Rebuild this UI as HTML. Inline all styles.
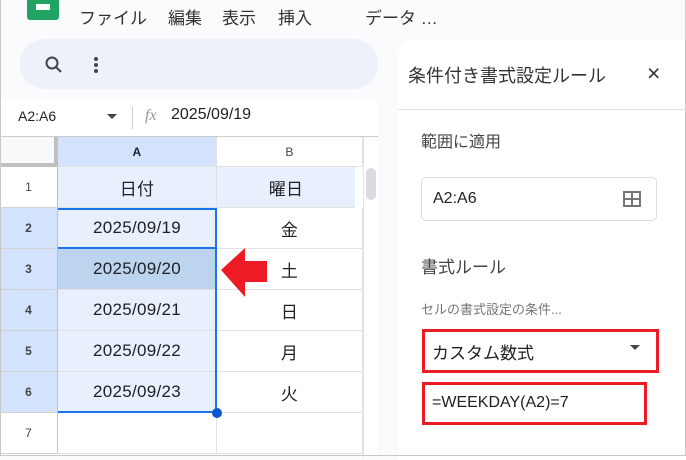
<!DOCTYPE html>
<html><head><meta charset="utf-8"><style>
*{margin:0;padding:0;box-sizing:border-box}
body{width:686px;height:456px;overflow:hidden;background:#f9fbfd;font-family:"Liberation Sans","Noto Sans CJK JP",sans-serif;position:relative;color:#202124}
.a{position:absolute}
.menu{top:4px;font-size:17px;color:#333}
.cell{position:absolute;display:flex;align-items:center;justify-content:center;border-right:1px solid #e1e1e1;border-bottom:1px solid #e1e1e1;font-size:17px;letter-spacing:0.3px}
.rh{position:absolute;left:0;width:58px;display:flex;align-items:center;justify-content:center;font-size:12px;color:#444;border-bottom:1px solid #d0d0d0;border-right:1px solid #c0c0c0}
</style></head><body>
<div class="a" style="left:0;top:0;width:686px;height:456px;border:1px solid #c8c8c8;border-top:none;z-index:50;pointer-events:none"></div>
<div class="a" style="left:27px;top:0;width:32px;height:20px;background:#1fa463;border-radius:0 0 3px 3px"></div>
<div class="a" style="left:36px;top:4px;width:14px;height:6px;background:#fff"></div>
<div class="a menu" style="left:79px">ファイル</div>
<div class="a menu" style="left:168px">編集</div>
<div class="a menu" style="left:222px">表示</div>
<div class="a menu" style="left:278px">挿入</div>
<div class="a menu" style="left:365px">データ …</div>
<div class="a" style="left:20px;top:39px;width:358px;height:50px;background:#edf2fa;border-radius:25px"></div>
<svg class="a" style="left:44px;top:55px" width="20" height="20" viewBox="0 0 20 20"><circle cx="8" cy="8" r="5.5" fill="none" stroke="#444" stroke-width="2"/><path d="M12 12l5 5" stroke="#444" stroke-width="2"/></svg>
<div class="a" style="left:94px;top:57px;width:4px;height:4px;border-radius:2px;background:#444;box-shadow:0 6px 0 #444,0 12px 0 #444"></div>
<div class="a" style="left:0;top:100px;width:378px;height:37px;background:#fff;border-bottom:1px solid #ccc"></div>
<div class="a" style="left:18px;top:108px;font-size:14px">A2:A6</div>
<div class="a" style="left:107px;top:114px;border:5px solid transparent;border-top:5px solid #444"></div>
<div class="a" style="left:132px;top:107px;width:1px;height:22px;background:#ccc"></div>
<div class="a" style="left:145px;top:107px;font-size:16px;font-style:italic;color:#999;font-family:'Liberation Serif',serif">fx</div>
<div class="a" style="left:171px;top:106px;font-size:16px">2025/09/19</div>
<div class="a" style="left:0;top:137px;width:378px;height:320px;background:#fff"></div>
<div class="a" style="left:0;top:137px;width:58px;height:30px;background:#f8f9fa;border-right:4px solid #c0c0c0;border-bottom:4px solid #c0c0c0"></div>
<div class="cell" style="left:58px;top:137px;width:159px;height:30px;background:#d3e3fd;font-size:12px;font-weight:bold">A</div>
<div class="cell" style="left:217px;top:137px;width:146px;height:30px;background:#fff;font-size:12px;color:#444">B</div>
<div class="cell" style="left:58px;top:167px;width:159px;height:41px;background:#e8f0fe">日付</div>
<div class="cell" style="left:217px;top:167px;width:138px;height:41px;background:#e8f0fe;border-right:none">曜日</div>
<div class="a" style="left:366px;top:168px;width:10px;height:32px;background:#dadce0;border-radius:5px"></div>
<div class="a" style="left:363px;top:137px;width:1px;height:320px;background:#e1e1e1"></div>
<div class="rh" style="top:167px;height:41px;background:#fff">1</div>
<div class="rh" style="top:208px;height:41px;background:#d3e3fd;font-weight:bold">2</div>
<div class="rh" style="top:249px;height:41px;background:#d3e3fd;font-weight:bold">3</div>
<div class="rh" style="top:290px;height:41px;background:#d3e3fd;font-weight:bold">4</div>
<div class="rh" style="top:331px;height:41px;background:#d3e3fd;font-weight:bold">5</div>
<div class="rh" style="top:372px;height:41px;background:#d3e3fd;font-weight:bold">6</div>
<div class="rh" style="top:413px;height:41px;background:#fff">7</div>
<div class="cell" style="left:58px;top:208px;width:159px;height:41px;background:#e8f0fe">2025/09/19</div>
<div class="cell" style="left:58px;top:249px;width:159px;height:41px;background:#bcd4ee">2025/09/20</div>
<div class="cell" style="left:58px;top:290px;width:159px;height:41px;background:#e8f0fe">2025/09/21</div>
<div class="cell" style="left:58px;top:331px;width:159px;height:41px;background:#e8f0fe">2025/09/22</div>
<div class="cell" style="left:58px;top:372px;width:159px;height:41px;background:#e8f0fe">2025/09/23</div>
<div class="cell" style="left:58px;top:413px;width:159px;height:41px"></div>
<div class="cell" style="left:217px;top:208px;width:146px;height:41px">金</div>
<div class="cell" style="left:217px;top:249px;width:146px;height:41px">土</div>
<div class="cell" style="left:217px;top:290px;width:146px;height:41px">日</div>
<div class="cell" style="left:217px;top:331px;width:146px;height:41px">月</div>
<div class="cell" style="left:217px;top:372px;width:146px;height:41px">火</div>
<div class="cell" style="left:217px;top:413px;width:146px;height:41px"></div>
<div class="a" style="left:58px;top:208px;width:159px;height:205px;border:2px solid #1a73e8;border-top:none;border-left:none"></div>
<div class="a" style="left:58px;top:208px;width:159px;height:41px;border:2px solid #1a73e8;border-left:none"></div>
<div class="a" style="left:58px;top:412px;width:159px;height:1px;background:#1a73e8"></div>
<div class="a" style="left:212px;top:408px;width:10px;height:10px;border-radius:5px;background:#0b57d0"></div>
<svg class="a" style="left:220px;top:248px" width="48" height="50"><path d="M1 22L25 0V13H47V34H25V49Z" fill="#ed1c24"/></svg>
<div class="a" style="left:398px;top:40px;width:288px;height:420px;background:#fff;border-radius:16px 0 0 0"></div>
<div class="a" style="left:408px;top:62px;font-size:18px;color:#333">条件付き書式設定ルール</div>
<div class="a" style="left:647px;top:60px;font-size:23px;color:#333">×</div>
<div class="a" style="left:398px;top:109px;width:288px;height:1px;background:#ddd"></div>
<div class="a" style="left:421px;top:128px;font-size:16px;color:#444">範囲に適用</div>
<div class="a" style="left:421px;top:177px;width:236px;height:44px;border:1px solid #ddd;border-radius:5px"></div>
<div class="a" style="left:433px;top:190px;font-size:16px">A2:A6</div>
<svg class="a" style="left:623px;top:191px" width="18" height="16"><rect x="1" y="1" width="16" height="14" fill="none" stroke="#777" stroke-width="2"/><path d="M9 1V15M1 8H17" stroke="#777" stroke-width="2"/></svg>
<div class="a" style="left:421px;top:253px;font-size:17px;color:#444">書式ルール</div>
<div class="a" style="left:421px;top:299px;font-size:13px;color:#777">セルの書式設定の条件...</div>
<div class="a" style="left:422px;top:329px;width:237px;height:44px;border:3px solid #ed1c24"></div>
<div class="a" style="left:432px;top:339px;font-size:17px">カスタム数式</div>
<div class="a" style="left:630px;top:345px;border:5px solid transparent;border-top:5px solid #444"></div>
<div class="a" style="left:422px;top:382px;width:225px;height:43px;border:3px solid #ed1c24"></div>
<div class="a" style="left:432px;top:394px;font-size:16px">=WEEKDAY(A2)=7</div>
</body></html>
